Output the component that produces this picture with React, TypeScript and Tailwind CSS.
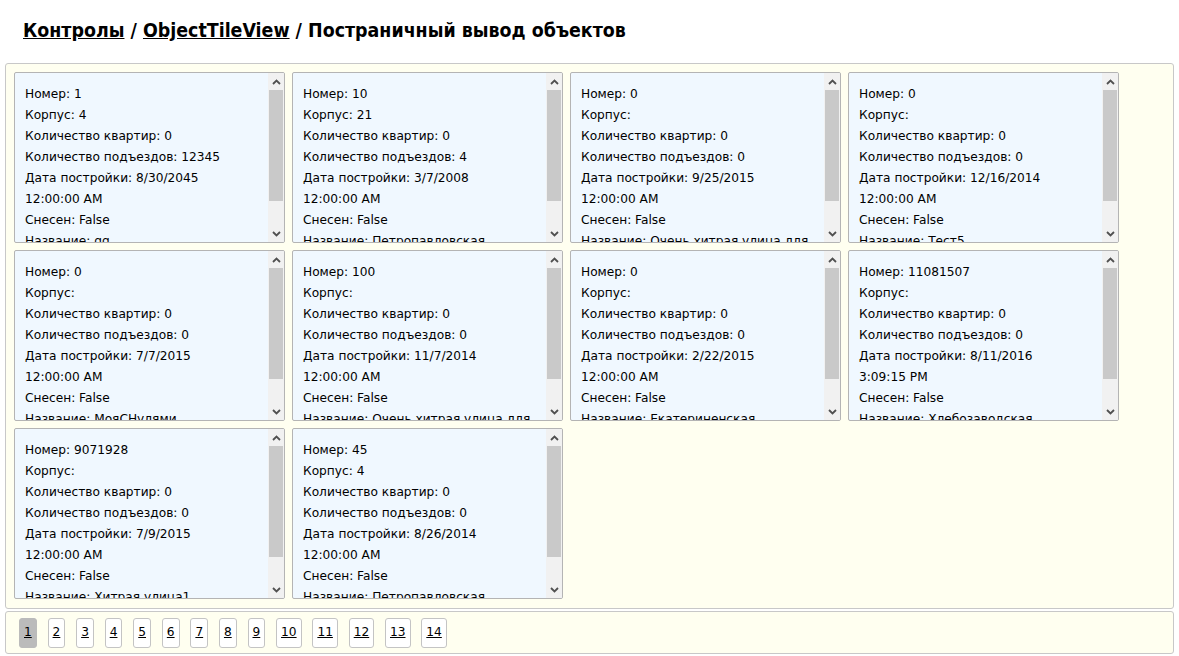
import React from 'react';

type Obj = {
  nomer: string;
  korpus: string;
  kv: string;
  pod: string;
  date: string;
  time: string;
  name: string;
};

const objects: Obj[] = [
  { nomer: '1', korpus: '4', kv: '0', pod: '12345', date: '8/30/2045', time: '12:00:00 AM', name: 'gg' },
  { nomer: '10', korpus: '21', kv: '0', pod: '4', date: '3/7/2008', time: '12:00:00 AM', name: 'Петропавловская' },
  { nomer: '0', korpus: '', kv: '0', pod: '0', date: '9/25/2015', time: '12:00:00 AM', name: 'Очень хитрая улица для проверки' },
  { nomer: '0', korpus: '', kv: '0', pod: '0', date: '12/16/2014', time: '12:00:00 AM', name: 'Тест5' },
  { nomer: '0', korpus: '', kv: '0', pod: '0', date: '7/7/2015', time: '12:00:00 AM', name: 'МояСНулями' },
  { nomer: '100', korpus: '', kv: '0', pod: '0', date: '11/7/2014', time: '12:00:00 AM', name: 'Очень хитрая улица для проверки' },
  { nomer: '0', korpus: '', kv: '0', pod: '0', date: '2/22/2015', time: '12:00:00 AM', name: 'Екатериненская' },
  { nomer: '11081507', korpus: '', kv: '0', pod: '0', date: '8/11/2016', time: '3:09:15 PM', name: 'Хлебозаводская' },
  { nomer: '9071928', korpus: '', kv: '0', pod: '0', date: '7/9/2015', time: '12:00:00 AM', name: 'Хитрая улица1' },
  { nomer: '45', korpus: '4', kv: '0', pod: '0', date: '8/26/2014', time: '12:00:00 AM', name: 'Петропавловская' },
];

const pages = ['1', '2', '3', '4', '5', '6', '7', '8', '9', '10', '11', '12', '13', '14'];

function Arrow({ up }: { up?: boolean }) {
  return (
    <svg width="9" height="6" viewBox="0 0 9 6" className="block">
      <path
        d={up ? 'M1 5 L4.5 1.5 L8 5' : 'M1 1 L4.5 4.5 L8 1'}
        fill="none"
        stroke="#505050"
        strokeWidth="1.8"
      />
    </svg>
  );
}

// нарисованная полоса прокрутки
function FakeScrollbar() {
  return (
    <div className="flex w-[16px] shrink-0 flex-col bg-[#f1f1f1]">
      <div className="flex h-[17px] items-center justify-center">
        <Arrow up />
      </div>
      <div className="mx-[1px] h-[111px] bg-[#c9c9c9]" />
      <div className="flex-1" />
      <div className="flex h-[17px] items-center justify-center">
        <Arrow />
      </div>
    </div>
  );
}

function Tile({ o }: { o: Obj }) {
  return (
    <div className="flex h-[171px] w-[271px] overflow-hidden rounded-[2px] border border-[#b4b4b4] bg-[#f0f8ff]">
      <div className="flex-1 overflow-hidden pl-[10px] pr-[8px] pt-[11px] text-[12.2px] leading-[21px] text-black">
        <div>Номер: {o.nomer}</div>
        <div>Корпус: {o.korpus}</div>
        <div>Количество квартир: {o.kv}</div>
        <div>Количество подъездов: {o.pod}</div>
        <div>
          Дата постройки: {o.date} <span className="whitespace-nowrap">{o.time}</span>
        </div>
        <div>Снесен: False</div>
        <div>Название: {o.name}</div>
      </div>
      <FakeScrollbar />
    </div>
  );
}

export default function App() {
  return (
    <div className="min-h-screen bg-white font-['DejaVu_Sans',Verdana,sans-serif] text-black">
      <h1 className="px-[23px] pb-[19px] pt-[18px] font-['DejaVu_Sans_Condensed','DejaVu_Sans',sans-serif] text-[19.4px] font-bold leading-[26px]">
        <a href="#" className="underline">Контролы</a>
        {' / '}
        <a href="#" className="underline">ObjectTileView</a>
        {' / '}
        Постраничный вывод объектов
      </h1>

      <div className="mx-[5px] h-[546px] rounded-[3px] border border-[#c8c8c8] bg-[#fffff0] p-[8px]">
        <div className="grid grid-cols-[repeat(4,271px)] gap-[7px]">
          {objects.map((o, i) => (
            <Tile key={i} o={o} />
          ))}
        </div>
      </div>

      <div className="mx-[5px] mt-[2px] flex h-[43px] items-center gap-[10.8px] rounded-[3px] border border-[#c8c8c8] bg-[#fffff0] pl-[13px]">
        {pages.map((p, i) => (
          <a
            key={p}
            href="#"
            className={
              i === 0
                ? 'flex h-[30px] items-center rounded-[3px] border border-[#bbbbbb] bg-[#bbbbbb] px-[4px] text-[12.2px] underline'
                : 'flex h-[30px] items-center rounded-[3px] border border-[#c4c4c4] bg-white px-[4px] text-[12.2px] underline'
            }
          >
            {p}
          </a>
        ))}
      </div>
    </div>
  );
}
